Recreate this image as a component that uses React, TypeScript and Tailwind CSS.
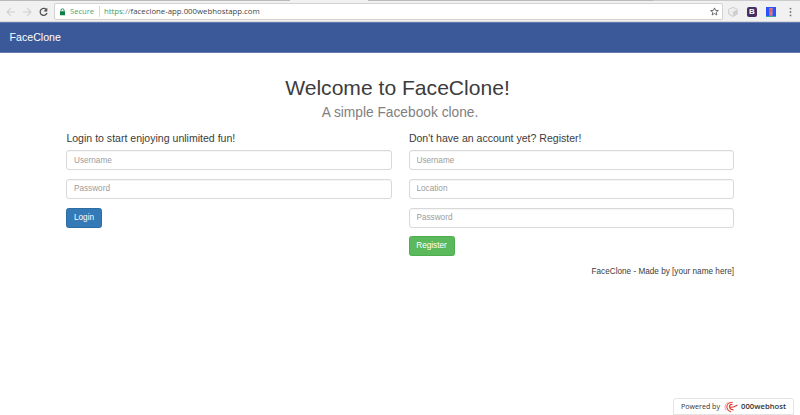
import React from "react";

function Field({ label }: { label: string }) {
  return (
    <input
      aria-label={label}
      placeholder={label}
      className="mb-[8.8px] block h-[20px] w-full rounded-[3px] border border-[#d9d9d9] bg-white px-[7px] text-[8.2px] leading-[18px] text-[#555] shadow-[inset_0_1px_1px_rgba(0,0,0,0.04)] outline-none placeholder:text-[#9c9c9c]"
    />
  );
}

function BrowserBar() {
  return (
    <header className="flex h-[22px] flex-col bg-[#f1f1f1]">
      <div className="flex h-px shrink-0">
        <div className="w-[290px] bg-[#b9b9b9]" />
        <div className="w-[78px] bg-[#f1f1f1]" />
        <div className="w-[285px] bg-[#b9b9b9]" />
        <div className="grow bg-[#cbcbcb]" />
      </div>
      <div className="flex h-[20px] shrink-0 items-center pt-[1px]">
        <svg className="ml-[6px] h-[10px] w-[44px] shrink-0" viewBox="0 0 44 10" fill="none">
          <path d="M9 5H1M4.8 1.2L1 5l3.8 3.8M17 5h8M21.2 1.2L25 5l-3.8 3.8" stroke="#d0d0d0" strokeWidth="1.1" />
          <path d="M40.3 2.5A3.5 3.5 0 1 0 41 6" stroke="#555" strokeWidth="1.35" />
          <path d="M41.3 .8v3.7h-3.8z" fill="#555" />
        </svg>
        <div className="ml-[4px] flex h-[17px] w-[669px] shrink-0 items-center rounded-[2px] border border-[#d2d2d2] bg-white font-['Open_Sans','Noto_Sans',sans-serif] text-[8px]">
          <svg className="ml-[4px] h-[8px] w-[7px]" viewBox="0 0 7 8" fill="none">
            <rect x="1" y="3.2" width="5" height="4.1" rx=".4" fill="#0b8043" />
            <path d="M2 3.5V2.3a1.5 1.5 0 0 1 3 0v1.2" stroke="#0b8043" strokeWidth=".9" />
          </svg>
          <span className="ml-[4px] w-[25px] whitespace-nowrap text-[7.6px] text-[#4aa574]">Secure</span>
          <span className="ml-[4px] h-[11px] w-px bg-[#d8d8d8]" />
          <span className="ml-[4px] whitespace-nowrap text-[7.8px] text-[#444]">
            <span className="text-[#3c9b68]">https</span><span className="text-[#888]">://</span>faceclone-app.000webhostapp.com
          </span>
          <svg className="mr-[3px] ml-auto h-[9px] w-[9px]" viewBox="0 0 9 9" fill="none">
            <path d="M4.5 .9l1 2.4 2.9.2-2.2 1.8.7 2.7-2.4-1.5-2.4 1.5.7-2.7L.6 3.5l2.9-.2z" stroke="#666" strokeWidth=".95" />
          </svg>
        </div>
        <svg className="ml-[5px] h-[10px] w-[10px] shrink-0" viewBox="0 0 10 10">
          <path d="M5 .4l4.3 1.7v5L5 9.5.7 7.1v-5z" fill="#ececec" stroke="#c0c0c0" strokeWidth=".7" />
          <path d="M5 4.2l4.2-2v4.9L5 9.4z" fill="#cfcfcf" />
          <path d="M.8 2.2L5 4.1l4.2-1.9" stroke="#f8f8f8" strokeWidth=".7" fill="none" />
        </svg>
        <span className="ml-[9px] flex h-[10px] w-[10px] shrink-0 items-center justify-center rounded-[2px] bg-[#443062] font-['Liberation_Sans',sans-serif] text-[8px] leading-[10px] font-bold text-white">B</span>
        <svg className="ml-[9px] h-[10px] w-[10px] shrink-0" viewBox="0 0 10 10">
          <path d="M0 0h10v10H0z" fill="#2853ff" />
          <path d="M0 9h10v1H0z" fill="#36a79d" />
          <path d="M3.5 1h3v7.6h-3z" fill="#e89a86" />
          <path d="M4.4 1.4h1.2v4H4.400zM4.400 6.400h1.200v1.400H4.400z" fill="#e33b36" />
        </svg>
        <svg className="ml-[13px] h-[10px] w-[3px] shrink-0" viewBox="0 0 3 10" fill="#777">
          <circle cx="1.5" cy="1.6" r=".95" />
          <circle cx="1.5" cy="5" r=".95" />
          <circle cx="1.5" cy="8.4" r=".95" />
        </svg>
      </div>
      <div className="h-px shrink-0 bg-[#d8d8d8]" />
    </header>
  );
}

export default function App() {
  return (
    <div className="flex h-[415px] w-[800px] flex-col overflow-hidden bg-white font-['Liberation_Sans',Arial,sans-serif] text-[#3c3c3c]">
      <BrowserBar />
      <nav className="flex h-[31px] shrink-0 items-center border-y border-[#607bb0] bg-[#3b5998] pl-[9.6px] text-[10.6px] text-white">
        <span>FaceClone</span>
      </nav>
      <main className="mx-auto flex w-[668px] grow flex-col">
        <h1 className="mt-[22px] pr-[5px] text-center text-[21.1px] leading-[26px]">Welcome to FaceClone!</h1>
        <p className="mt-[4px] text-center text-[13.75px] leading-[16px] text-[#808080]">A simple Facebook clone.</p>
        <div className="mt-[11px] grid grid-cols-2 gap-[17px]">
          <form>
            <h2 className="mb-[5px] pl-[0.4px] text-[10.55px] leading-[13px]">Login to start enjoying unlimited fun!</h2>
            <Field label="Username" />
            <Field label="Password" />
            <button type="button" className="block h-[20px] w-[36px] rounded-[2.5px] border border-[#2e6da4] bg-[#337ab7] text-[8.2px] leading-[18px] text-white">Login</button>
          </form>
          <form>
            <h2 className="mb-[5px] pl-[0.4px] text-[10.55px] leading-[13px]">Don't have an account yet? Register!</h2>
            <Field label="Username" />
            <Field label="Location" />
            <Field label="Password" />
            <button type="button" className="block h-[20px] w-[46px] rounded-[2.5px] border border-[#4cae4c] bg-[#5cb85c] text-[8.2px] leading-[18px] text-white">Register</button>
          </form>
        </div>
        <p className="mt-[9.6px] text-right text-[8.2px] leading-[12px]">FaceClone - Made by [your name here]</p>
      </main>
      <footer className="mr-[6px] flex h-[17px] w-[121px] shrink-0 items-center self-end rounded-t-[3px] border border-[#e4e4e4] bg-white pl-[7px] font-['Open_Sans','Noto_Sans',sans-serif] text-[7.1px] whitespace-nowrap text-[#333]">
        <span className="w-[39px]">Powered by</span>
        <svg className="ml-[4px] h-[12px] w-[14px] shrink-0" viewBox="0 0 14 12" fill="none" strokeLinecap="round">
          <path d="M4 1.4C.9 3 .3 6.300 1.700 9" stroke="#f0938b" strokeWidth=".9" />
          <path d="M8.300 1.200C4.300 1.300 2.300 4 3 7c.5 2 1.800 3.200 3.800 3.700" stroke="#e5453b" strokeWidth="1.100" />
          <path d="M8 3.300C6 3.500 5.200 4.500 5.600 5.800c2 .9 4.600.3 7.400-1.500M5.600 6c.3 1.700 1.500 2.800 3.500 2.900" stroke="#df382e" strokeWidth="1.200" />
        </svg>
        <span className="ml-[3px] text-[7.7px] font-semibold">000webhost</span>
      </footer>
    </div>
  );
}
